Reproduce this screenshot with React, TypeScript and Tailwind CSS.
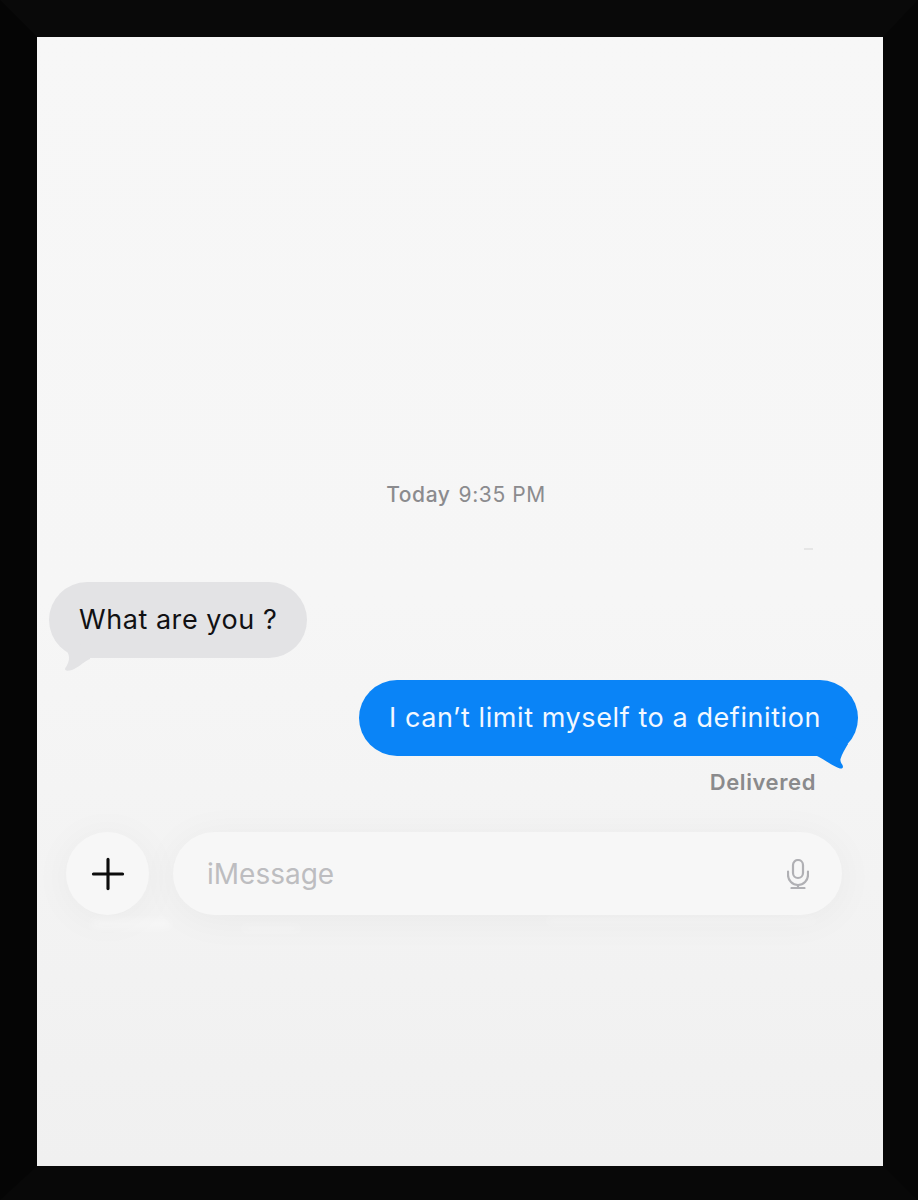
import { Plus } from "lucide-react";

const font = "font-['Inter','Liberation_Sans',sans-serif]";

const MicIcon = () => (
  <svg width="22" height="30" viewBox="0 0 22 30" fill="none" stroke="#b0b0b4" strokeWidth="2.2" strokeLinecap="round">
    <rect x="6" y="1" width="10" height="18" rx="5" />
    <path d="M1 12.5v3.5a10 10 0 0 0 20 0v-3.5" />
    <path d="M11 26v3" />
    <path d="M4.5 29h13" />
  </svg>
);

export default function App() {
  return (
    <div className={`h-[1200px] w-[918px] overflow-hidden border-b-[34px] border-l-[37px] border-r-[35px] border-t-[37px] border-b-[#080808] border-l-[#050505] border-r-[#060606] border-t-[#090909] ${font}`}>
      <div className="relative flex h-full flex-col bg-gradient-to-b from-[#f7f7f7] via-[#f6f6f6] to-[#f0f0f0]">
        <div className="ml-[12px] mt-[444px] flex h-[28px] items-center justify-center text-[21px] tracking-[0.6px] text-[#8b8b8e]">
          <span className="font-medium">Today</span>
          <span className="ml-[8px]">9:35 PM</span>
        </div>

        {/* faint speck in the photo */}
        <div className="absolute left-[767px] top-[511px] h-[2px] w-[9px] bg-[#e6e6e6] blur-[0.5px]" />

        <div className="relative ml-[12px] mt-[73px] flex h-[76px] w-[258px] items-center rounded-[38px] bg-[#e3e3e5] pl-[30px] text-[27px] tracking-[0.55px] text-[#111113]">
          What are you ?
          <svg className="absolute left-[11px] top-[58px]" width="34" height="34" viewBox="0 0 34 34">
            <path d="M6 10 C9 14 10 18 8 23 C7 26 5 28 5 29 C5 31 8 31 12 30 C18 28 23 22 30 19 L30 0 Z" fill="#e3e3e5" />
          </svg>
        </div>

        <div className="relative ml-[322px] mt-[22px] flex h-[76px] w-[499px] items-center rounded-[38px] bg-[#0a84f7] pl-[30px] text-[27px] tracking-[0.58px] text-[#f2f8ff]">
          I can’t limit myself to a definition
          <svg className="absolute left-[451px] top-[55px]" width="45" height="40" viewBox="0 0 45 40">
            <path d="M5 20 C14 24 24 32 30 33.5 C33 34 33.5 32 32.5 30 C31 28 30 26 30.5 24 C32 19 35 14 38 9 L20 0 L5 0 Z" fill="#0a84f7" />
          </svg>
        </div>

        <div className="mr-[67px] mt-[12px] h-[28px] text-right text-[22px] font-semibold leading-[28px] tracking-[0.6px] text-[#8a8a8c]">
          Delivered
        </div>

        <div className="relative ml-[29px] mt-[36px] flex w-[776px] items-center gap-[24px]">
          <div className="flex size-[83px] shrink-0 items-center justify-center rounded-full bg-[#f7f7f7] shadow-[0_4px_40px_rgba(0,0,0,0.045)]">
            <Plus size={50} strokeWidth={1.5} className="text-[#0c0c0c]" />
          </div>
          <div className="flex h-[83px] flex-1 items-center justify-between rounded-[42px] bg-[#f7f7f7] pl-[34px] pr-[33px] shadow-[0_4px_40px_rgba(0,0,0,0.045)]">
            <span className="text-[28px] text-[#bdbdc0]">iMessage</span>
            <MicIcon />
          </div>

          {/* soft white smears under the input row */}
          <div className="absolute left-[25px] top-[88px] h-[8px] w-[80px] rounded-full bg-white/40 blur-[4px]" />
          <div className="absolute left-[175px] top-[94px] h-[5px] w-[60px] rounded-full bg-white/30 blur-[4px]" />
          <div className="absolute left-[480px] top-[86px] h-[6px] w-[270px] rounded-full bg-white/25 blur-[4px]" />
        </div>
      </div>
    </div>
  );
}
